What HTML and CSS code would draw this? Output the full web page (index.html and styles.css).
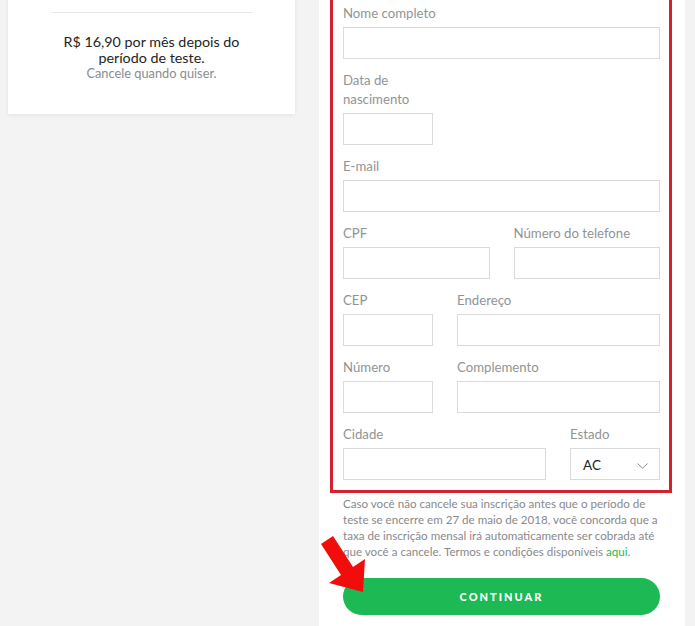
FILE: index.html
```html
<!DOCTYPE html>
<html lang="pt-BR">
<head>
<meta charset="utf-8">
<title>Assinatura</title>
<link rel="stylesheet" href="styles.css">
</head>
<body>
<div class="page">
  <aside class="summary">
    <div class="summary-rule"></div>
    <p class="price">R$ 16,90 por mês depois do período de teste.</p>
    <p class="cancel">Cancele quando quiser.</p>
  </aside>

  <main class="panel">
    <form class="form-box">
      <div class="field">
        <label class="label">Nome completo</label>
        <div class="input"></div>
      </div>
      <div class="field">
        <label class="label narrow">Data de nascimento</label>
        <div class="input small"></div>
      </div>
      <div class="field">
        <label class="label">E-mail</label>
        <div class="input"></div>
      </div>
      <div class="row row-half">
        <div class="field">
          <label class="label">CPF</label>
          <div class="input"></div>
        </div>
        <div class="field">
          <label class="label">Número do telefone</label>
          <div class="input"></div>
        </div>
      </div>
      <div class="row row-small">
        <div class="field">
          <label class="label">CEP</label>
          <div class="input"></div>
        </div>
        <div class="field">
          <label class="label">Endereço</label>
          <div class="input"></div>
        </div>
      </div>
      <div class="row row-small">
        <div class="field">
          <label class="label">Número</label>
          <div class="input"></div>
        </div>
        <div class="field">
          <label class="label">Complemento</label>
          <div class="input"></div>
        </div>
      </div>
      <div class="row row-city">
        <div class="field last">
          <label class="label">Cidade</label>
          <div class="input"></div>
        </div>
        <div class="field last">
          <label class="label">Estado</label>
          <div class="input select">
            <span class="select-value">AC</span>
            <svg class="chevron" width="11" height="6" viewBox="0 0 11 6"><path d="M0.5 0.5 L5.5 5.2 L10.5 0.5" fill="none" stroke="#8a8c8f" stroke-width="1"/></svg>
          </div>
        </div>
      </div>
    </form>

    <p class="legal">Caso você não cancele sua inscrição antes que o período de<br>teste se encerre em 27 de maio de 2018, você concorda que a<br>taxa de inscrição mensal irá automaticamente ser cobrada até<br>que você a cancele. Termos e condições disponíveis <a class="link" href="#">aqui</a>.</p>

    <button class="btn" type="button">CONTINUAR</button>
  </main>
</div>

<svg class="arrow" width="60" height="70" viewBox="315 530 60 70">
  <polygon points="321,544 333,536 353,567 365,559 363,592 329,583 341,575" fill="#f20d0d"/>
</svg>
</body>
</html>
```

FILE: styles.css
```css
* { box-sizing: border-box; }

html, body {
  margin: 0;
  padding: 0;
  background: #f3f3f3;
  height: 626px;
  overflow: hidden;
  font-family: Lato, "Open Sans", "Liberation Sans", sans-serif;
}

.page {
  display: flex;
  align-items: flex-start;
  padding-left: 8px;
  gap: 24px;
}

.summary {
  width: 287px;
  margin-top: -30px;
  background: #fff;
  padding: 42px 40px 32px;
  text-align: center;
  box-shadow: 0 1px 4px rgba(0,0,0,0.07);
}

.summary-rule {
  height: 1px;
  background: #e6e6e6;
  margin: 0 3px 21px 4px;
}

.price {
  margin: 0;
  font-size: 14.3px;
  line-height: 15.5px;
  color: #222326;
}

.cancel {
  margin: 1px 0 0;
  font-size: 12.8px;
  line-height: 15.5px;
  color: #8a8c8f;
}

.panel {
  width: 366px;
  height: 700px;
  margin-top: -20px;
  background: #fff;
  padding: 0 25px 0 24px;
}

.form-box {
  margin: 12px -12px 0 -13px;
  padding: 9px 9px 10px 10px;
  border: 3px solid #d4212d;
}

.field {
  margin-bottom: 12px;
  min-width: 0;
}

.field.last { margin-bottom: 0; }

.label {
  display: block;
  font-size: 13.2px;
  line-height: 19px;
  color: #919496;
  margin-bottom: 4px;
}

.label.narrow { width: 70px; }

.input {
  height: 32px;
  border: 1px solid #d9dadc;
  background: #fff;
}

.input.small { width: 90px; }

.row {
  display: grid;
  column-gap: 24px;
}

.row-half { grid-template-columns: 1fr 1fr; }
.row-small { grid-template-columns: 90px 1fr; }
.row-city { grid-template-columns: 1fr 90px; }

.select {
  display: flex;
  align-items: center;
  justify-content: space-between;
  padding: 0 11px 0 12px;
}

.select-value {
  font-size: 13.5px;
  color: #222326;
  padding-top: 1px;
}

.chevron { margin-top: 4px; }

.legal {
  margin: 3px -4px 0 0;
  font-size: 11.6px;
  line-height: 16px;
  color: #88898c;
}

.link {
  color: #1db954;
  text-decoration: none;
}

.btn {
  display: block;
  width: 100%;
  height: 37px;
  margin-top: 18px;
  border: none;
  border-radius: 19px;
  background: #1db954;
  color: #fff;
  font-family: Lato, "Open Sans", "Liberation Sans", sans-serif;
  font-weight: 900;
  font-size: 11px;
  letter-spacing: 2px;
}

.arrow {
  position: absolute;
  left: 315px;
  top: 530px;
  pointer-events: none;
}
```
